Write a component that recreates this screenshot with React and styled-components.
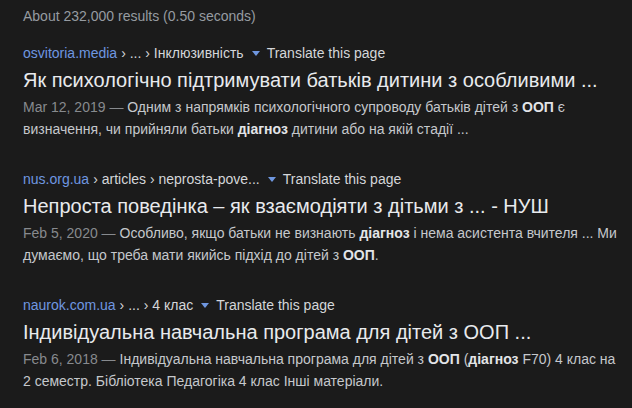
import React from 'react'
import styled, { createGlobalStyle } from 'styled-components'

const results = [
  {
    site: 'osvitoria.media',
    path: '› ... › Інклюзивність',
    title: 'Як психологічно підтримувати батьків дитини з особливими ...',
    date: 'Mar 12, 2019',
    snippet: [
      'Одним з напрямків психологічного супроводу батьків дітей з ',
      { b: 'ООП' },
      ' є визначення, чи прийняли батьки ',
      { b: 'діагноз' },
      ' дитини або на якій стадії ...'
    ]
  },
  {
    site: 'nus.org.ua',
    path: '› articles › neprosta-pove...',
    title: 'Непроста поведінка – як взаємодіяти з дітьми з ... - НУШ',
    date: 'Feb 5, 2020',
    snippet: [
      'Особливо, якщо батьки не визнають ',
      { b: 'діагноз' },
      ' і нема асистента вчителя ... Ми думаємо, що треба мати якийсь підхід до дітей з ',
      { b: 'ООП' },
      '.'
    ]
  },
  {
    site: 'naurok.com.ua',
    path: '› ... › 4 клас',
    title: 'Індивідуальна навчальна програма для дітей з ООП ...',
    date: 'Feb 6, 2018',
    snippet: [
      'Індивідуальна навчальна програма для дітей з ',
      { b: 'ООП' },
      ' (',
      { b: 'діагноз' },
      ' F70) 4 клас на 2 семестр. Бібліотека Педагогіка 4 клас Інші матеріали.'
    ]
  }
]

const App = () => {
  return (
    <Page>
      <GlobalStyle />
      <Stats>About 232,000 results (0.50 seconds)</Stats>
      <List>
        {results.map((r, i) => (
          <Result key={i}>
            <Cite>
              <Site>{r.site}</Site>
              <Path>{r.path}</Path>
              <Arrow />
              <Translate>Translate this page</Translate>
            </Cite>
            <Title>{r.title}</Title>
            <Snippet>
              <DateText>{r.date} — </DateText>
              {r.snippet.map((part, j) =>
                typeof part === 'string' ? part : <Em key={j}>{part.b}</Em>
              )}
            </Snippet>
          </Result>
        ))}
      </List>
    </Page>
  )
}

const GlobalStyle = createGlobalStyle`
  html, body { margin: 0; padding: 0; background: #1b1b1b; }
  body { font-family: "Liberation Sans", Arial, sans-serif; }
`

// page
const Page = styled.div`
  padding: 6px 0 0 23px;
  min-height: 408px;
  box-sizing: border-box;
  background: #1b1b1b;
`
const Stats = styled.div`
  font-size: 14px; line-height: 20px; color: #969ba1;
`
const List = styled.div`
  display: flex; flex-direction: column; gap: 29px;
  margin-top: 17px;
`
const Result = styled.div`
  width: 600px;
`
// breadcrumb row
const Cite = styled.div`
  display: flex; align-items: center;
  font-size: 14px; line-height: 20px; white-space: nowrap;
`
const Site = styled.span`color: #6f97e0;`
const Path = styled.span`color: #d4d6d9; margin-left: 4px;`
const Arrow = styled.span`
  width: 0; height: 0; margin: 1px 7px 0 8px;
  border-left: 4px solid transparent;
  border-right: 4px solid transparent;
  border-top: 5px solid #6f97e0;
`
const Translate = styled.span`color: #d4d6d9;`
const Title = styled.h3`
  margin: 4px 0 3px; font-weight: 400;
  font-size: 20px; line-height: 26px; color: #e8eaed;
  white-space: nowrap;
`
const Snippet = styled.div`
  font-size: 14px; line-height: 22px; color: #c5c8cc;
`
const DateText = styled.span`color: #878a8e;`
const Em = styled.b`color: #e3e5e8; font-weight: 700;`

export default App
